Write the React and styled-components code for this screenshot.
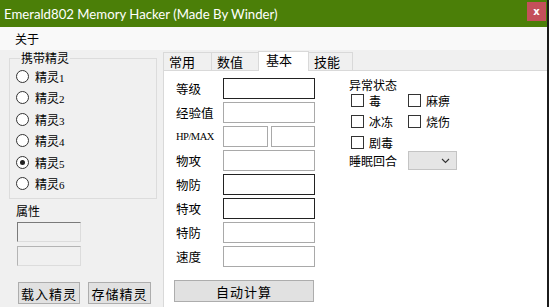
import styled, { createGlobalStyle } from 'styled-components';

const GlobalStyle = createGlobalStyle`
  html, body {
    margin: 0;
    padding: 0;
    background: #1c1c1c;
  }
  body {
    font-family: "Noto Sans CJK SC", "Noto Sans", sans-serif;
    font-size: 12px;
    color: #000;
  }
`;

const Window = styled.div`
  width: 547px;
  height: 307px;
  overflow: hidden;
  background: #f0f0f0;
  display: flex;
  flex-direction: column;
`;

const TitleBar = styled.div`
  height: 27px;
  flex: none;
  background: #4b7f08;
  display: flex;
  align-items: center;
  justify-content: space-between;
  padding-left: 4px;
`;

const Title = styled.div`
  font-family: Lato, "Noto Sans", sans-serif;
  font-size: 13.2px;
  color: #fff;
`;

const CloseButton = styled.div`
  width: 19px;
  height: 19px;
  margin-right: 1px;
  margin-top: -4px;
  background: #c4505a;
  color: #fff;
  font-family: "DejaVu Sans", sans-serif;
  font-size: 10px;
  font-weight: bold;
  display: flex;
  align-items: center;
  justify-content: center;
`;

const MenuBar = styled.div`
  height: 23px;
  flex: none;
  background: #f9f9f9;
  display: flex;
  align-items: center;
  padding-left: 15px;
`;

const Body = styled.div`
  flex: 1;
  display: flex;
  min-height: 0;
`;

const LeftColumn = styled.div`
  width: 163px;
  flex: none;
  display: flex;
  flex-direction: column;
`;

const GroupBox = styled.fieldset`
  margin: 2px 6px 0 9px;
  padding: 4px 0 4px 6px;
  border: 1px solid #dcdcdc;
  height: 147px;
  box-sizing: border-box;
  display: flex;
  flex-direction: column;
  gap: 5px;
`;

const Legend = styled.legend`
  padding: 0 1px;
  margin-left: 4px;
  line-height: 12px;
`;

const RadioRow = styled.div`
  display: flex;
  align-items: center;
  gap: 6px;
  height: 16.5px;
`;

const RadioCircle = styled.span`
  width: 11px;
  height: 11px;
  border: 1px solid #333;
  border-radius: 50%;
  background: #fff;
  display: flex;
  align-items: center;
  justify-content: center;
  &::after {
    content: '';
    width: 5px;
    height: 5px;
    border-radius: 50%;
    background: ${p => (p.checked ? '#222' : 'transparent')};
  }
`;

const Digit = styled.span`
  font-family: "Liberation Serif", serif;
  font-size: 11px;
`;

const SectionLabel = styled.div`
  margin: 5px 0 0 16px;
  line-height: 14px;
`;

const SmallBox = styled.div`
  width: 62px;
  height: 18px;
  margin-left: 17px;
  margin-top: 4px;
  background: #f0f0f0;
  border: 1px solid ${p => (p.sunken ? '#7a7a7a' : '#b4b4b4')};
  border-right-color: #dcdcdc;
  border-bottom-color: #dcdcdc;
`;

const ButtonRow = styled.div`
  display: flex;
  gap: 8px;
  margin: 16px 0 0 18px;
`;

const Button = styled.div`
  width: ${p => p.width || 61}px;
  height: 22px;
  box-sizing: border-box;
  background: #e1e1e1;
  border: 1px solid #adadad;
  display: flex;
  align-items: center;
  justify-content: center;
  font-size: 13px;
  letter-spacing: 1px;
`;

const TabControl = styled.div`
  flex: 1;
  display: flex;
  flex-direction: column;
`;

const TabStrip = styled.div`
  display: flex;
  align-items: flex-end;
  height: 20px;
`;

const Tab = styled.div`
  width: ${p => p.width}px;
  height: ${p => (p.active ? 20 : 18)}px;
  box-sizing: border-box;
  border: 1px solid #d9d9d9;
  border-bottom: none;
  margin-left: ${p => (p.first ? 0 : -1)}px;
  background: ${p => (p.active ? '#fff' : '#f0f0f0')};
  position: relative;
  z-index: ${p => (p.active ? 1 : 0)};
  margin-bottom: ${p => (p.active ? -1 : 0)}px;
  padding: ${p => (p.active ? '0 0 0 7px' : '1px 0 0 5px')};
  font-size: 13px;
  line-height: 16px;
`;

const Panel = styled.div`
  flex: 1;
  background: #fff;
  border: 1px solid #d9d9d9;
  border-right: none;
  border-bottom: none;
  display: flex;
  padding: 7px 0 0 12px;
`;

const FormColumn = styled.div`
  width: 139px;
  display: flex;
  flex-direction: column;
`;

const FormGrid = styled.div`
  display: grid;
  grid-template-columns: 47px 1fr;
  row-gap: 3px;
  align-items: center;
`;

const FieldLabel = styled.div`
  font-size: ${p => (p.small ? 10.5 : 12.5)}px;
  font-family: ${p => (p.small ? '"Liberation Serif", serif' : 'inherit')};
  letter-spacing: ${p => (p.small ? '-0.5px' : '0')};
  line-height: 21px;
`;

const Inputs = styled.div`
  display: flex;
  gap: 3px;
`;

const Input = styled.div`
  flex: 1;
  height: 21px;
  box-sizing: border-box;
  background: #fff;
  border: 1px solid ${p => (p.focus ? '#222' : '#a9a9a9')};
`;

const WideButton = styled(Button)`
  margin-top: 13px;
  margin-left: -2px;
  width: 140px;
`;

const StatusColumn = styled.div`
  margin-left: 34px;
  display: flex;
  flex-direction: column;
`;

const StatusTitle = styled.div`
  line-height: 14px;
`;

const CheckGrid = styled.div`
  display: grid;
  grid-template-columns: 57px 60px;
  row-gap: 6px;
  margin: 1px 0 0 2px;
`;

const CheckItem = styled.div`
  display: flex;
  align-items: center;
  gap: 5px;
  height: 15px;
`;

const CheckBox = styled.span`
  width: 11px;
  height: 11px;
  border: 1px solid #333;
  background: #fff;
`;

const SleepRow = styled.div`
  display: flex;
  align-items: center;
  gap: 11px;
  margin-top: 1px;
`;

const Select = styled.div`
  width: 49px;
  height: 19px;
  box-sizing: border-box;
  background: #e5e5e5;
  border: 1px solid #c4c4c4;
  display: flex;
  align-items: center;
  justify-content: flex-end;
  padding-right: 6px;
`;

const Chevron = () => (
  <svg width="9" height="6" viewBox="0 0 9 6">
    <path d="M1 1 L4.5 4.5 L8 1" fill="none" stroke="#333" strokeWidth="1.1" />
  </svg>
);

const sprites = [1, 2, 3, 4, 5, 6];

const fields = [
  { label: '等级', focus: true },
  { label: '经验值' },
  { label: 'HP/MAX', small: true, pair: true },
  { label: '物攻' },
  { label: '物防', focus: true },
  { label: '特攻', focus: true },
  { label: '特防' },
  { label: '速度' },
];

const tabs = [
  { name: '常用', width: 49 },
  { name: '数值', width: 48 },
  { name: '基本', width: 51, active: true },
  { name: '技能', width: 45 },
];

const App = () => (
  <>
    <GlobalStyle />
    <Window>
      <TitleBar>
        <Title>Emerald802 Memory Hacker (Made By Winder)</Title>
        <CloseButton>x</CloseButton>
      </TitleBar>
      <MenuBar>关于</MenuBar>
      <Body>
        <LeftColumn>
          <GroupBox>
            <Legend>携带精灵</Legend>
            {sprites.map(n => (
              <RadioRow key={n}>
                <RadioCircle checked={n === 5} />
                <span>
                  精灵<Digit>{n}</Digit>
                </span>
              </RadioRow>
            ))}
          </GroupBox>
          <SectionLabel>属性</SectionLabel>
          <SmallBox sunken />
          <SmallBox />
          <ButtonRow>
            <Button width={62}>载入精灵</Button>
            <Button width={63}>存储精灵</Button>
          </ButtonRow>
        </LeftColumn>
        <TabControl>
          <TabStrip>
            {tabs.map((t, i) => (
              <Tab key={t.name} width={t.width} active={t.active} first={i === 0}>
                {t.name}
              </Tab>
            ))}
          </TabStrip>
          <Panel>
            <FormColumn>
              <FormGrid>
                {fields.map(f => [
                  <FieldLabel key={f.label} small={f.small}>
                    {f.label}
                  </FieldLabel>,
                  <Inputs key={f.label + '-in'}>
                    <Input focus={f.focus} />
                    {f.pair && <Input />}
                  </Inputs>,
                ])}
              </FormGrid>
              <WideButton>自动计算</WideButton>
            </FormColumn>
            <StatusColumn>
              <StatusTitle>异常状态</StatusTitle>
              <CheckGrid>
                <CheckItem><CheckBox />毒</CheckItem>
                <CheckItem><CheckBox />麻痹</CheckItem>
                <CheckItem><CheckBox />冰冻</CheckItem>
                <CheckItem><CheckBox />烧伤</CheckItem>
                <CheckItem><CheckBox />剧毒</CheckItem>
              </CheckGrid>
              <SleepRow>
                睡眠回合
                <Select>
                  <Chevron />
                </Select>
              </SleepRow>
            </StatusColumn>
          </Panel>
        </TabControl>
      </Body>
    </Window>
  </>
);

export default App;
